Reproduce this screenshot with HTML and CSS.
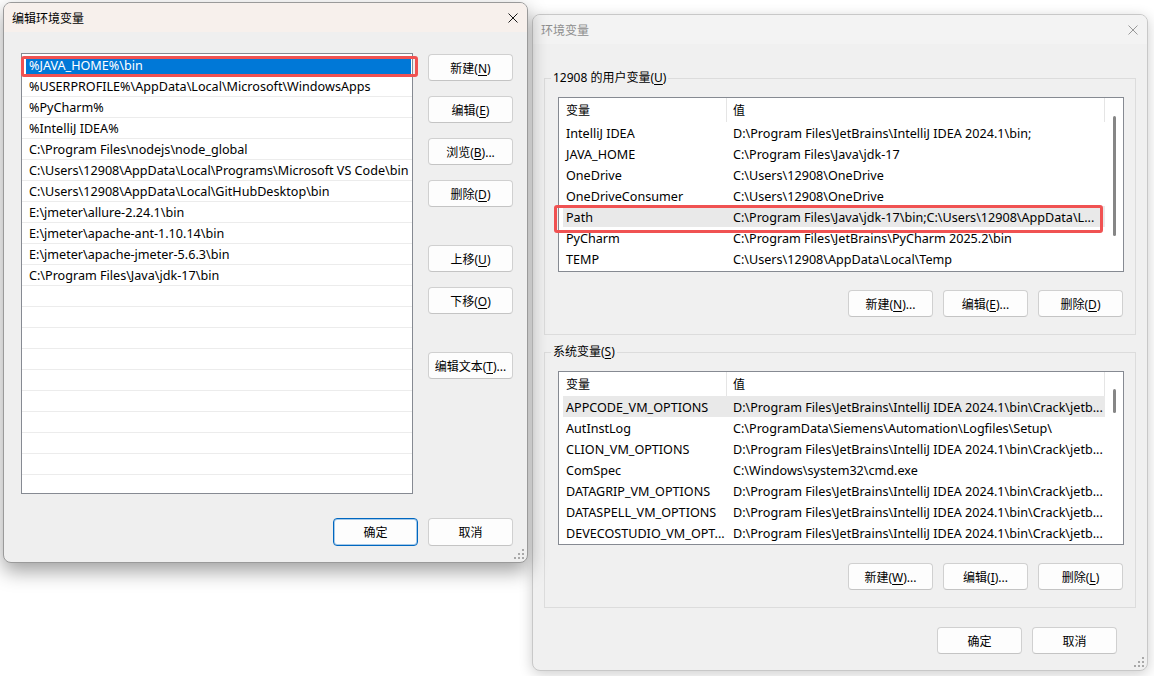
FILE: index.html
```html
<!DOCTYPE html>
<html lang="zh-CN">
<head>
    <meta charset="UTF-8">
    <title>环境变量</title>
    <link rel="stylesheet" href="styles.css">
</head>
<body>
    <div class="win env-win">
        <div class="titlebar">
            <span class="title">环境变量</span>
            <svg class="close" width="10" height="10" viewBox="0 0 10 10"><path d="M0.5 0.5L9.5 9.5M9.5 0.5L0.5 9.5"/></svg>
        </div>
        <div class="env-body">
            <fieldset class="group">
                <legend>12908 的用户变量(<u>U</u>)</legend>
                <div class="var-list">
                    <div class="var-table">
                        <div class="var-head"><span class="c1">变量</span><span class="c2">值</span></div>
                        <div class="var-row"><span class="c1">IntelliJ IDEA</span><span class="c2">D:\Program Files\JetBrains\IntelliJ IDEA 2024.1\bin;</span></div>
                        <div class="var-row"><span class="c1">JAVA_HOME</span><span class="c2">C:\Program Files\Java\jdk-17</span></div>
                        <div class="var-row"><span class="c1">OneDrive</span><span class="c2">C:\Users\12908\OneDrive</span></div>
                        <div class="var-row"><span class="c1">OneDriveConsumer</span><span class="c2">C:\Users\12908\OneDrive</span></div>
                        <div class="var-row hl"><span class="c1">Path</span><span class="c2">C:\Program Files\Java\jdk-17\bin;C:\Users\12908\AppData\L...</span></div>
                        <div class="var-row"><span class="c1">PyCharm</span><span class="c2">C:\Program Files\JetBrains\PyCharm 2025.2\bin</span></div>
                        <div class="var-row"><span class="c1">TEMP</span><span class="c2">C:\Users\12908\AppData\Local\Temp</span></div>
                    </div>
                    <div class="vscroll"><i class="thumb thumb-user"></i></div>
                </div>
                <div class="btn-row">
                    <button class="btn">新建(<u>N</u>)...</button>
                    <button class="btn">编辑(<u>E</u>)...</button>
                    <button class="btn">删除(<u>D</u>)</button>
                </div>
            </fieldset>
            <fieldset class="group sys">
                <legend>系统变量(<u>S</u>)</legend>
                <div class="var-list">
                    <div class="var-table">
                        <div class="var-head"><span class="c1">变量</span><span class="c2">值</span></div>
                        <div class="var-row hl"><span class="c1">APPCODE_VM_OPTIONS</span><span class="c2">D:\Program Files\JetBrains\IntelliJ IDEA 2024.1\bin\Crack\jetb...</span></div>
                        <div class="var-row"><span class="c1">AutInstLog</span><span class="c2">C:\ProgramData\Siemens\Automation\Logfiles\Setup\</span></div>
                        <div class="var-row"><span class="c1">CLION_VM_OPTIONS</span><span class="c2">D:\Program Files\JetBrains\IntelliJ IDEA 2024.1\bin\Crack\jetb...</span></div>
                        <div class="var-row"><span class="c1">ComSpec</span><span class="c2">C:\Windows\system32\cmd.exe</span></div>
                        <div class="var-row"><span class="c1">DATAGRIP_VM_OPTIONS</span><span class="c2">D:\Program Files\JetBrains\IntelliJ IDEA 2024.1\bin\Crack\jetb...</span></div>
                        <div class="var-row"><span class="c1">DATASPELL_VM_OPTIONS</span><span class="c2">D:\Program Files\JetBrains\IntelliJ IDEA 2024.1\bin\Crack\jetb...</span></div>
                        <div class="var-row"><span class="c1">DEVECOSTUDIO_VM_OPT...</span><span class="c2">D:\Program Files\JetBrains\IntelliJ IDEA 2024.1\bin\Crack\jetb...</span></div>
                    </div>
                    <div class="vscroll"><i class="thumb thumb-sys"></i></div>
                </div>
                <div class="btn-row">
                    <button class="btn">新建(<u>W</u>)...</button>
                    <button class="btn">编辑(<u>I</u>)...</button>
                    <button class="btn">删除(<u>L</u>)</button>
                </div>
            </fieldset>
            <div class="footer env-footer">
                <button class="btn">确定</button>
                <button class="btn">取消</button>
            </div>
        </div>
        <svg class="grip" width="10" height="10" viewBox="0 0 10 10"><path d="M8 0h2v2H8zM4 4h2v2H4zM8 4h2v2H8zM0 8h2v2H0zM4 8h2v2H4zM8 8h2v2H8z"/></svg>
    </div>

    <div class="win edit-win">
        <div class="titlebar">
            <span class="title">编辑环境变量</span>
            <svg class="close" width="10" height="10" viewBox="0 0 10 10"><path d="M0.5 0.5L9.5 9.5M9.5 0.5L0.5 9.5"/></svg>
        </div>
        <div class="edit-body">
            <div class="edit-main">
                <div class="path-list">
                    <div class="path-row sel"><span>%JAVA_HOME%\bin</span></div>
                    <div class="path-row"><span>%USERPROFILE%\AppData\Local\Microsoft\WindowsApps</span></div>
                    <div class="path-row"><span>%PyCharm%</span></div>
                    <div class="path-row"><span>%IntelliJ IDEA%</span></div>
                    <div class="path-row"><span>C:\Program Files\nodejs\node_global</span></div>
                    <div class="path-row"><span>C:\Users\12908\AppData\Local\Programs\Microsoft VS Code\bin</span></div>
                    <div class="path-row"><span>C:\Users\12908\AppData\Local\GitHubDesktop\bin</span></div>
                    <div class="path-row"><span>E:\jmeter\allure-2.24.1\bin</span></div>
                    <div class="path-row"><span>E:\jmeter\apache-ant-1.10.14\bin</span></div>
                    <div class="path-row"><span>E:\jmeter\apache-jmeter-5.6.3\bin</span></div>
                    <div class="path-row"><span>C:\Program Files\Java\jdk-17\bin</span></div>
                    <div class="path-row"><span></span></div>
                    <div class="path-row"><span></span></div>
                    <div class="path-row"><span></span></div>
                    <div class="path-row"><span></span></div>
                    <div class="path-row"><span></span></div>
                    <div class="path-row"><span></span></div>
                    <div class="path-row"><span></span></div>
                    <div class="path-row"><span></span></div>
                    <div class="path-row"><span></span></div>
                    <div class="path-row"><span></span></div>
                </div>
                <div class="side-buttons">
                    <button class="btn">新建(<u>N</u>)</button>
                    <button class="btn">编辑(<u>E</u>)</button>
                    <button class="btn">浏览(<u>B</u>)...</button>
                    <button class="btn">删除(<u>D</u>)</button>
                    <button class="btn spaced">上移(<u>U</u>)</button>
                    <button class="btn">下移(<u>O</u>)</button>
                    <button class="btn spaced">编辑文本(<u>T</u>)...</button>
                </div>
            </div>
            <div class="footer">
                <button class="btn primary">确定</button>
                <button class="btn">取消</button>
            </div>
        </div>
        <svg class="grip" width="10" height="10" viewBox="0 0 10 10"><path d="M8 0h2v2H8zM4 4h2v2H4zM8 4h2v2H8zM0 8h2v2H0zM4 8h2v2H4zM8 8h2v2H8z"/></svg>
    </div>

    <div class="mark mark-path-entry"></div>
    <div class="mark mark-path-var"></div>
</body>
</html>
```

FILE: styles.css
```css
* {
    box-sizing: border-box;
}
body {
    margin: 0;
    width: 1154px;
    height: 676px;
    position: relative;
    overflow: hidden;
    background: #fff;
    font-family: "Noto Sans", "Noto Sans CJK SC", sans-serif;
    font-size: 12.6px;
    color: #000;
}
u {
    text-underline-offset: 2px;
}

/* windows */
.win {
    position: absolute;
    display: flex;
    flex-direction: column;
    border-radius: 8px;
}
.edit-win {
    left: 3px;
    top: 2px;
    width: 525px;
    height: 561px;
    background: #efefef;
    border: 1px solid #9a9a9a;
    box-shadow: 0 8px 20px rgba(0,0,0,0.38);
    z-index: 2;
}
.env-win {
    left: 532px;
    top: 14px;
    width: 616px;
    height: 657px;
    background: #f0f0f0;
    border: 1px solid #c8c8c8;
    box-shadow: 0 3px 14px rgba(0,0,0,0.2);
}
.titlebar {
    height: 29px;
    flex: none;
    display: flex;
    align-items: center;
    justify-content: space-between;
    padding: 0 9px 0 8px;
    border-radius: 7px 7px 0 0;
    font-size: 12px;
}
.edit-win .titlebar {
    background: #f7f0ec;
}
.env-win .titlebar {
    background: #f3f3f3;
    color: #8e8e8e;
}
.close path {
    stroke: #1a1a1a;
    stroke-width: 1;
    fill: none;
}
.env-win .close path {
    stroke: #999;
}
.grip {
    position: absolute;
    right: 3px;
    bottom: 3px;
}
.grip path {
    fill: #a8a8a8;
}

/* buttons */
.btn {
    width: 85px;
    height: 27px;
    padding: 0;
    font-family: inherit;
    font-size: 12px;
    color: #000;
    background: #fdfdfd;
    border: 1px solid #d0d0d0;
    border-bottom-color: #c4c4c4;
    border-radius: 4px;
}
.btn.primary {
    border-color: #0067c0;
    box-shadow: inset 0 0 0 1px rgba(0,103,192,0.35);
}
.footer {
    display: flex;
    justify-content: flex-end;
    gap: 10px;
}

/* edit dialog */
.edit-body {
    flex: 1;
    padding: 21px 14px 0 17px;
}
.edit-main {
    display: flex;
    gap: 15px;
}
.path-list {
    flex: 1;
    height: 441px;
    overflow: hidden;
    background: #fff;
    border: 1px solid #868a92;
    padding-top: 1px;
}
.path-row {
    height: 21px;
    display: flex;
    border-bottom: 1px solid #ececec;
    padding: 0 1px 0 4px;
    white-space: nowrap;
}
.path-row span {
    flex: 1;
    display: flex;
    align-items: center;
    padding-left: 3px;
    overflow: hidden;
}
.path-row.sel span {
    margin: 2px 0 1px;
    background: #0078d7;
    color: #fff;
}
.side-buttons {
    width: 85px;
    display: flex;
    flex-direction: column;
    gap: 15px;
    padding-top: 1px;
}
.side-buttons .spaced {
    margin-top: 23px;
}
.edit-win .footer {
    margin-top: 24px;
}
.edit-win .footer .btn {
    height: 28px;
}

/* environment dialog */
.env-body {
    flex: 1;
    padding: 26px 11px 0;
}
.group {
    margin: 0;
    padding: 0 11px 17px 13px;
    border: 1px solid #dcdcdc;
    min-width: 0;
}
.group.sys {
    margin-top: 9px;
}
.group legend {
    padding: 0 2px;
    margin-left: -7px;
    line-height: 16px;
    font-size: 12px;
}
.var-list {
    margin-top: 11px;
    height: 175px;
    display: flex;
    background: #fff;
    border: 1px solid #868a92;
    overflow: hidden;
}
.sys .var-list {
    height: 174px;
}
.var-table {
    flex: 1;
    min-width: 0;
}
.var-head,
.var-row {
    display: flex;
    margin-left: 4px;
    white-space: nowrap;
}
.var-head {
    height: 24px;
    align-items: stretch;
    border-right: 1px solid #e5e5e5;
    font-size: 12px;
}
.var-head span {
    display: flex;
    align-items: center;
}
.var-head .c1 {
    border-right: 1px solid #e5e5e5;
}
.var-row {
    height: 21px;
    align-items: center;
    padding-top: 1px;
}
.var-row.hl {
    background: #e9e9e9;
}
.c1 {
    width: 164px;
    flex: none;
    padding-left: 3px;
    overflow: hidden;
}
.c2 {
    flex: 1;
    padding-left: 6px;
    overflow: hidden;
}
.vscroll {
    width: 18px;
    flex: none;
    display: flex;
    justify-content: center;
}
.thumb {
    display: block;
    width: 3px;
    background: #868686;
    border-radius: 2px;
}
.thumb-user {
    margin-top: 18px;
    height: 120px;
}
.thumb-sys {
    margin-top: 17px;
    height: 24px;
}
.btn-row {
    margin-top: 18px;
    padding-right: 1px;
    display: flex;
    justify-content: flex-end;
    gap: 10px;
}
.env-footer {
    margin-top: 19px;
    padding-right: 19px;
}

/* red annotation boxes */
.mark {
    position: absolute;
    border: 3px solid #f05252;
    border-radius: 3px;
    z-index: 3;
}
.mark-path-entry {
    left: 21px;
    top: 56px;
    width: 397px;
    height: 21px;
}
.mark-path-var {
    left: 554px;
    top: 205px;
    width: 549px;
    height: 28px;
}
```
